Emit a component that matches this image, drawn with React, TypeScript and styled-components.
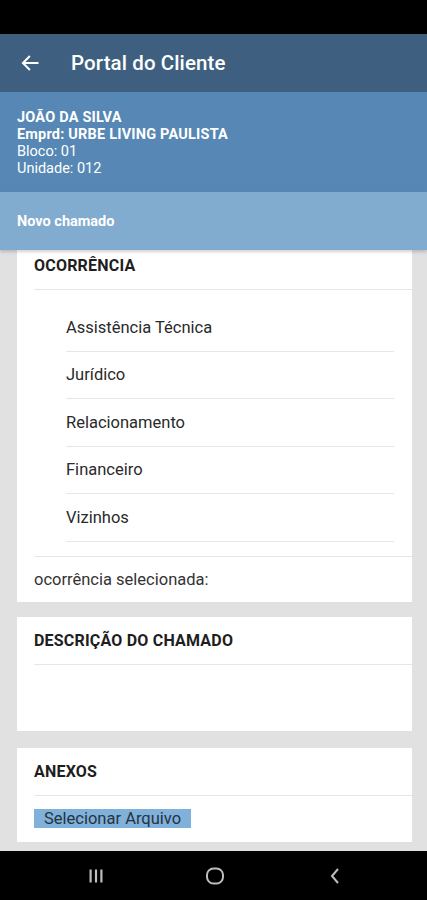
import React from 'react';
import styled, { createGlobalStyle } from 'styled-components';

const GlobalStyle = createGlobalStyle`
  html, body {
    margin: 0;
    padding: 0;
    background: #e1e1e1;
  }
  body {
    font-family: Roboto, 'Noto Sans', 'Liberation Sans', sans-serif;
    -webkit-font-smoothing: antialiased;
  }
  * {
    box-sizing: border-box;
  }
`;

const Screen = styled.div`
  width: 427px;
  height: 900px;
  display: flex;
  flex-direction: column;
  background: #e1e1e1;
  overflow: hidden;
`;

const StatusBar = styled.div`
  height: 34px;
  flex-shrink: 0;
  background: #000;
`;

const AppBar = styled.header`
  height: 58px;
  flex-shrink: 0;
  display: flex;
  align-items: center;
  gap: 31px;
  padding-left: 20px;
  background: #3e5f7f;
  color: #fff;
`;

const BackButton = styled.button`
  display: flex;
  align-items: center;
  padding: 0;
  border: 0;
  background: none;
  color: #fff;
`;

const Title = styled.h1`
  margin: 0;
  font-size: 20.5px;
  font-weight: 500;
  letter-spacing: 0.1px;
`;

const UserInfo = styled.section`
  height: 100px;
  flex-shrink: 0;
  padding: 17px 17px 0;
  background: #5687b5;
  color: #fff;
  font-size: 14.5px;
  line-height: 17px;
`;

const InfoLine = styled.div<{ $bold?: boolean }>`
  font-weight: ${(p) => (p.$bold ? 700 : 400)};
  letter-spacing: ${(p) => (p.$bold ? '0.2px' : '0')};
`;

const Band = styled.div`
  position: relative;
  z-index: 1;
  height: 58px;
  flex-shrink: 0;
  display: flex;
  align-items: center;
  padding-left: 17px;
  background: #81abcf;
  color: #fff;
  font-size: 14.5px;
  font-weight: 700;
  box-shadow: 0 2px 3px rgba(0, 0, 0, 0.18);
`;

const Content = styled.main`
  flex: 1;
  display: flex;
  flex-direction: column;
  gap: 15px;
  margin-top: -8px;
  padding: 0 15px 0 17px;
  overflow: hidden;
`;

const Card = styled.section<{ $gapBefore?: number }>`
  flex-shrink: 0;
  background: #fff;
  margin-top: ${(p) => p.$gapBefore ?? 0}px;
`;

const CardHeader = styled.h2`
  margin: 0;
  height: 47px;
  display: flex;
  align-items: center;
  padding-left: 17px;
  font-size: 16px;
  font-weight: 700;
  color: #1e1e1e;
  letter-spacing: 0.2px;
`;

const Divider = styled.hr<{ $inset: number; $right?: number }>`
  margin: 0 ${(p) => p.$right ?? 0}px 0 ${(p) => p.$inset}px;
  border: 0;
  border-top: 1px solid #e6e6e6;
`;

const OptionList = styled.ul`
  list-style: none;
  margin: 0;
  padding: 14px 0 14px;
`;

const Option = styled.li`
  height: 47.5px;
  display: flex;
  align-items: center;
  margin: 0 18px 0 49px;
  border-bottom: 1px solid #e6e6e6;
  font-size: 16.5px;
  color: #2a2a2a;
`;

const Selected = styled.div`
  height: 45px;
  display: flex;
  align-items: center;
  padding-left: 17px;
  font-size: 16.5px;
  color: #333;
`;

const DescriptionBody = styled.div`
  height: 66px;
`;

const AttachBody = styled.div`
  height: 47px;
  padding: 13px 0 0 17px;
`;

const FileButton = styled.button`
  display: block;
  height: 19px;
  padding: 0 10px;
  border: 0;
  background: #7fb1da;
  color: #263340;
  font-family: Roboto, 'Noto Sans', sans-serif;
  font-size: 16.5px;
  line-height: 19px;
`;

const NavBar = styled.nav`
  height: 49px;
  flex-shrink: 0;
  margin-top: 9px;
  display: grid;
  grid-template-columns: repeat(3, 1fr);
  align-items: center;
  justify-items: center;
  background: #000;
  padding: 0 32px 0 36px;
`;

const options = [
  'Assistência Técnica',
  'Jurídico',
  'Relacionamento',
  'Financeiro',
  'Vizinhos',
];

export default function App() {
  return (
    <Screen>
      <GlobalStyle />
      <StatusBar />
      <AppBar>
        <BackButton aria-label="Voltar">
          <svg width="20" height="20" viewBox="0 0 24 24" fill="none" stroke="#fff" strokeWidth="2.4" strokeLinecap="square">
            <path d="M21 12H4M11 4.5 3.5 12l7.5 7.5" />
          </svg>
        </BackButton>
        <Title>Portal do Cliente</Title>
      </AppBar>
      <UserInfo>
        <InfoLine $bold>JOÃO DA SILVA</InfoLine>
        <InfoLine $bold>Emprd: URBE LIVING PAULISTA</InfoLine>
        <InfoLine>Bloco: 01</InfoLine>
        <InfoLine>Unidade: 012</InfoLine>
      </UserInfo>
      <Band>Novo chamado</Band>
      <Content>
        <Card>
          <CardHeader>OCORRÊNCIA</CardHeader>
          <Divider $inset={17} />
          <OptionList>
            {options.map((o) => (
              <Option key={o}>{o}</Option>
            ))}
          </OptionList>
          <Divider $inset={17} />
          <Selected>ocorrência selecionada:</Selected>
        </Card>
        <Card>
          <CardHeader>DESCRIÇÃO DO CHAMADO</CardHeader>
          <Divider $inset={17} />
          <DescriptionBody />
        </Card>
        <Card $gapBefore={2}>
          <CardHeader>ANEXOS</CardHeader>
          <Divider $inset={17} />
          <AttachBody>
            <FileButton>Selecionar Arquivo</FileButton>
          </AttachBody>
        </Card>
      </Content>
      <NavBar>
        <svg width="16" height="16" viewBox="0 0 16 16" fill="#bdbdbd">
          <rect x="1.5" y="1.5" width="2.2" height="13" />
          <rect x="6.9" y="1.5" width="2.2" height="13" />
          <rect x="12.3" y="1.5" width="2.2" height="13" />
        </svg>
        <svg width="20" height="18" viewBox="0 0 20 18" fill="none" stroke="#bdbdbd" strokeWidth="2">
          <rect x="2" y="1.5" width="16" height="15" rx="6.5" />
        </svg>
        <svg width="14" height="18" viewBox="0 0 14 18" fill="none" stroke="#bdbdbd" strokeWidth="2">
          <path d="M10 2 4 9l6 7" />
        </svg>
      </NavBar>
    </Screen>
  );
}
